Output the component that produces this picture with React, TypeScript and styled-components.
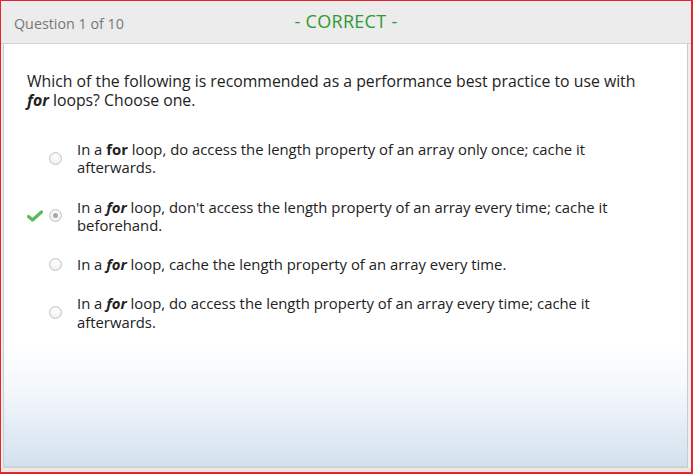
import React from "react";
import styled, { createGlobalStyle } from "styled-components";

const Global = createGlobalStyle`
  html, body { margin: 0; padding: 0; }
  body { font-family: "Open Sans", "Noto Sans", sans-serif; background: #fff; }
`;

const Frame = styled.div`
  box-sizing: border-box;
  width: 693px;
  height: 474px;
  border-top: 1px solid #e3262b;
  border-left: 1px solid #e3262b;
  border-right: 2px solid #e3262b;
  border-bottom: 2px solid #e3262b;
  background: #f1e4e4;
  display: flex;
  flex-direction: column;
`;

const Header = styled.div`
  height: 42px;
  flex: none;
  background: #ececec;
  border-bottom: 1px solid #d2d2d2;
  display: grid;
  grid-template-columns: 1fr auto 1fr;
  align-items: center;
  padding: 0 13px;
`;

const Counter = styled.div`
  font-size: 14.3px;
  color: #777;
  padding-top: 3px;
`;

const Status = styled.div`
  font-size: 18px;
  color: #2f9a32;
  letter-spacing: 0.3px;
  margin-top: -3px;
`;

const Body = styled.div`
  flex: 1;
  display: flex;
  background: #eeeeee;
  padding-right: 3px;
  padding-left: 2px;
  margin-bottom: 4px;
`;

const Panel = styled.div`
  flex: 1;
  border-left: 1px solid #c9cccc;
  border-right: 1px solid #c9cccc;
  border-bottom: 2px solid #ccd4d3;
  background: linear-gradient(to bottom, #ffffff 0, #ffffff 300px, #f4f8fc 345px, #d3e1ee 100%);
  padding: 28px 0 0 23px;
`;

const Question = styled.p`
  margin: 0 0 30px;
  max-width: 620px;
  font-size: 15.8px;
  line-height: 19px;
  color: #222;
`;

const Options = styled.div`
  display: flex;
  flex-direction: column;
  gap: 21px;
`;

const Option = styled.div`
  display: grid;
  grid-template-columns: 22px 22px 1fr;
  align-items: center;
`;

const Mark = styled.div`
  display: flex;
  align-items: center;
  justify-content: flex-start;
`;

const Radio = styled.span<{ $checked?: boolean }>`
  box-sizing: border-box;
  width: 13px;
  height: 13px;
  border-radius: 50%;
  border: 1px solid #c4c4c4;
  background: radial-gradient(circle at 50% 40%, #ffffff 0, #f2f2f2 60%, #e2e2e2 100%);
  display: flex;
  align-items: center;
  justify-content: center;
  &::after {
    content: "";
    display: ${(p) => (p.$checked ? "block" : "none")};
    width: 5px;
    height: 5px;
    border-radius: 50%;
    background: #a8a8a8;
  }
`;

const Label = styled.div`
  font-size: 14.85px;
  line-height: 18.3px;
  color: #222;
  padding-left: 6px;
  max-width: 545px;
`;

const Check = () => (
  <svg width="16" height="12" viewBox="0 0 16 12">
    <path d="M1.5 6.5 L5.5 10 L14.5 2" fill="none" stroke="#5cb85c" strokeWidth="3.2" strokeLinejoin="round" strokeLinecap="round" />
  </svg>
);

const options: { parts: React.ReactNode; checked?: boolean; correct?: boolean }[] = [
  {
    parts: (
      <>
        In a <b>for</b> loop, do access the length property of an array only once; cache it afterwards.
      </>
    ),
  },
  {
    parts: (
      <>
        In a <b><i>for</i></b> loop, don't access the length property of an array every time; cache it beforehand.
      </>
    ),
    checked: true,
    correct: true,
  },
  {
    parts: (
      <>
        In a <b><i>for</i></b> loop, cache the length property of an array every time.
      </>
    ),
  },
  {
    parts: (
      <>
        In a <b><i>for</i></b> loop, do access the length property of an array every time; cache it afterwards.
      </>
    ),
  },
];

export default function App() {
  return (
    <>
      <Global />
      <Frame>
        <Header>
          <Counter>Question 1 of 10</Counter>
          <Status>- CORRECT -</Status>
          <div />
        </Header>
        <Body>
          <Panel>
            <Question>
              Which of the following is recommended as a performance best practice to use with{" "}
              <b><i>for</i></b> loops? Choose one.
            </Question>
            <Options>
              {options.map((o, i) => (
                <Option key={i}>
                  <Mark>{o.correct ? <Check /> : null}</Mark>
                  <Radio $checked={o.checked} />
                  <Label>{o.parts}</Label>
                </Option>
              ))}
            </Options>
          </Panel>
        </Body>
      </Frame>
    </>
  );
}
